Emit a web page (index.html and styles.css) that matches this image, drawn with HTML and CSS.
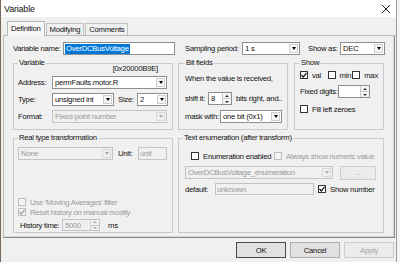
FILE: index.html
```html
<!DOCTYPE html>
<html lang="en">
<head>
    <meta charset="UTF-8">
    <title>Variable</title>
    <link rel="stylesheet" href="styles.css">
</head>
<body>
    <div class="window">
        <div class="titlebar">
            <span class="title">Variable</span>
            <svg class="close" width="10" height="10" viewBox="0 0 10 10"><path d="M1 1L9 9M9 1L1 9" stroke="#222" stroke-width="1"/></svg>
        </div>

        <!-- Tabs -->
        <div class="tabs">
            <div class="tab active">Definition</div>
            <div class="tab">Modifying</div>
            <div class="tab">Comments</div>
        </div>

        <div class="pane">
            <div class="row">
                <span class="lbl lbl-name">Variable name:</span>
                <div class="edit name-edit"><span class="selected">OverDCBusVoltage</span></div>
                <span class="lbl lbl-period">Sampling period:</span>
                <div class="combo period-combo"><span class="val">1 s</span><span class="drop"></span></div>
                <span class="lbl lbl-showas">Show as:</span>
                <div class="combo showas-combo"><span class="val">DEC</span><span class="drop"></span></div>
            </div>

            <div class="group-row top-groups">
                <fieldset class="group var-group">
                    <legend>Variable</legend>
                    <div class="addr-hex">[0x20000B9E]</div>
                    <div class="row first">
                        <span class="lbl lbl-var">Address:</span>
                        <div class="combo addr-combo"><span class="val">permFaults.motor.R</span><span class="drop"></span></div>
                    </div>
                    <div class="row">
                        <span class="lbl lbl-var">Type:</span>
                        <div class="combo type-combo"><span class="val">unsigned int</span><span class="drop"></span></div>
                        <span class="lbl lbl-size">Size:</span>
                        <div class="combo size-combo"><span class="val">2</span><span class="drop"></span></div>
                    </div>
                    <div class="row">
                        <span class="lbl lbl-var">Format:</span>
                        <div class="combo addr-combo disabled"><span class="val">Fixed point number</span><span class="drop"></span></div>
                    </div>
                </fieldset>

                <fieldset class="group bit-group">
                    <legend>Bit fields</legend>
                    <div class="bf-text">When the value is received,</div>
                    <div class="row shift-row">
                        <span class="lbl lbl-shift">shift it:</span>
                        <div class="spin shift-spin"><span class="val">8</span><span class="spin-btns"><i class="up"></i><i class="down"></i></span></div>
                        <span class="after">bits right, and..</span>
                    </div>
                    <div class="row mask-row">
                        <span class="lbl lbl-mask">mask with:</span>
                        <div class="combo mask-combo"><span class="val">one bit (0x1)</span><span class="drop"></span></div>
                    </div>
                </fieldset>

                <fieldset class="group show-group">
                    <legend>Show</legend>
                    <div class="cb-row show-checks">
                        <label class="cbitem item-val"><span class="cb checked"><svg width="6" height="6" viewBox="0 0 6 6"><path d="M0.5 3L2.3 5L5.5 0.8" fill="none" stroke="#111" stroke-width="1.2"/></svg></span>val</label>
                        <label class="cbitem item-min"><span class="cb"></span>min</label>
                        <label class="cbitem"><span class="cb"></span>max</label>
                    </div>
                    <div class="row digits-row">
                        <span class="lbl lbl-digits">Fixed digits:</span>
                        <div class="spin digits-spin"><span class="val"></span><span class="spin-btns"><i class="up"></i><i class="down"></i></span></div>
                    </div>
                    <div class="cb-row fill-row">
                        <label class="cbitem"><span class="cb"></span>Fill left zeroes</label>
                    </div>
                </fieldset>
            </div>

            <div class="group-row bottom-groups">
                <fieldset class="group real-group">
                    <legend>Real type transformation</legend>
                    <div class="gbody">
                        <div class="row none-row">
                            <div class="combo none-combo disabled"><span class="val">None</span><span class="drop"></span></div>
                            <span class="lbl lbl-unit">Unit:</span>
                            <div class="edit unit-edit disabled">unit</div>
                        </div>
                        <div class="history">
                            <div class="cb-row">
                                <label class="cbitem disabled"><span class="cb"></span>Use 'Moving Averages' filter</label>
                            </div>
                            <div class="cb-row">
                                <label class="cbitem disabled"><span class="cb checked"><svg width="6" height="6" viewBox="0 0 6 6"><path d="M0.5 3L2.3 5L5.5 0.8" fill="none" stroke="#9a9a9a" stroke-width="1.2"/></svg></span>Reset history on manual modify</label>
                            </div>
                            <div class="row history-row">
                                <span class="lbl lbl-history">History time:</span>
                                <div class="spin history-spin disabled"><span class="val">5000</span><span class="spin-btns"><i class="up"></i><i class="down"></i></span></div>
                                <span class="after ms">ms</span>
                            </div>
                        </div>
                    </div>
                </fieldset>

                <fieldset class="group enum-group">
                    <legend>Text enumeration (after transform)</legend>
                    <div class="cb-row enum-checks">
                        <label class="cbitem item-enum"><span class="cb"></span>Enumeration enabled</label>
                        <label class="cbitem disabled"><span class="cb"></span>Always show numeric value</label>
                    </div>
                    <div class="row enum-row">
                        <div class="combo enum-combo disabled"><span class="val">OverDCBusVoltage_enumeration</span><span class="drop"></span></div>
                        <div class="btn small-btn disabled">...</div>
                    </div>
                    <div class="row default-row">
                        <span class="lbl lbl-default">default:</span>
                        <div class="edit default-edit disabled">unknown</div>
                        <label class="cbitem item-shownum"><span class="cb checked"><svg width="6" height="6" viewBox="0 0 6 6"><path d="M0.5 3L2.3 5L5.5 0.8" fill="none" stroke="#111" stroke-width="1.2"/></svg></span>Show number</label>
                    </div>
                </fieldset>
            </div>
        </div>

        <!-- Dialog buttons -->
        <div class="buttons">
            <div class="btn dlg-btn default">OK</div>
            <div class="btn dlg-btn">Cancel</div>
            <div class="btn dlg-btn disabled">Apply</div>
        </div>
    </div>
</body>
</html>
```

FILE: styles.css
```css
/* General Styles */
* {
    box-sizing: border-box;
}

body {
    margin: 0;
    background-color: #f4f4f6;
    font-family: "Liberation Sans", Arial, sans-serif;
    font-size: 7.7px;
    letter-spacing: -0.25px;
    color: #111;
}

.window {
    width: 397px;
    height: 262px;
    overflow: hidden;
    background: #f0f0f0;
    border-left: 1px solid #7a6858;
    border-right: 1px solid #9a9a9a;
}

.titlebar {
    height: 17px;
    background: #fff;
    display: flex;
    align-items: center;
    justify-content: space-between;
    padding: 0 5px 0 3px;
}

.title {
    font-size: 9px;
    letter-spacing: -0.2px;
}

/* Tabs */
.tabs {
    display: flex;
    align-items: flex-end;
    height: 14px;
    margin-top: 4px;
    padding-left: 6px;
}

.tab {
    height: 12px;
    line-height: 11px;
    padding: 0 3px;
    margin-right: 1px;
    border: 1px solid #c2c2c2;
    border-bottom: none;
    background: #f0f0f0;
}

.tab.active {
    position: relative;
    z-index: 1;
    height: 15px;
    margin-bottom: -1px;
    line-height: 13px;
    background: #f7f7f7;
    border-color: #b8b8b8;
}

.pane {
    height: 203px;
    margin: 0 1px 0 2px;
    padding: 6px 0 0 9px;
    border: 1px solid #b8b8b8;
    border-right-color: #8a8a8a;
    border-bottom-color: #8a8a8a;
    box-shadow: inset -1px -1px 0 #d4d4d4;
}

/* Rows and labels */
.row {
    display: flex;
    align-items: center;
    height: 13px;
}

.lbl {
    flex: none;
    white-space: nowrap;
}

.lbl-name { width: 50px; }
.lbl-period { width: 57px; margin-left: 10px; }
.lbl-showas { width: 32px; margin-left: 8px; }
.lbl-var { width: 34px; }
.lbl-size { width: 19px; margin-left: 4px; }
.lbl-shift { width: 23px; }
.lbl-mask { width: 35px; }
.lbl-digits { width: 38px; }
.lbl-unit { width: 20px; margin-left: 5px; }
.lbl-history { width: 42px; margin-left: 2px; }
.lbl-default { width: 30px; margin-left: 2px; }

.after {
    margin-left: 4px;
    white-space: nowrap;
}

.ms {
    margin-left: 8px;
}

/* Controls */
.edit,
.combo,
.spin {
    display: flex;
    align-items: center;
    height: 13px;
    background: #fff;
    border: 1px solid #8e8e8e;
    white-space: nowrap;
    overflow: hidden;
}

.edit {
    padding-left: 1px;
}

.selected {
    background: #0078d7;
    color: #fff;
    line-height: 10px;
    padding: 0 1px;
}

.combo .val,
.spin .val {
    flex: 1;
    padding-left: 2px;
    overflow: hidden;
}

.drop {
    flex: none;
    width: 9px;
    height: 9px;
    margin-right: 1px;
    border: 1px solid #d0d0d0;
    background: #f6f6f6;
    display: flex;
    align-items: center;
    justify-content: center;
}

.drop::after {
    content: "";
    border-left: 2.5px solid transparent;
    border-right: 2.5px solid transparent;
    border-top: 3px solid #000;
}

.spin-btns {
    flex: none;
    width: 9px;
    height: 100%;
    display: flex;
    flex-direction: column;
    border-left: 1px solid #c8c8c8;
    background: #f4f4f4;
}

.spin-btns i {
    flex: 1;
    display: flex;
    align-items: center;
    justify-content: center;
}

.spin-btns i.up {
    border-bottom: 1px solid #c8c8c8;
}

.spin-btns i.up::after {
    content: "";
    border-left: 2px solid transparent;
    border-right: 2px solid transparent;
    border-bottom: 2px solid #333;
}

.spin-btns i.down::after {
    content: "";
    border-left: 2px solid transparent;
    border-right: 2px solid transparent;
    border-top: 2px solid #333;
}

.disabled {
    color: #9a9a9a;
}

.edit.disabled,
.combo.disabled,
.spin.disabled {
    background: #f0f0f0;
    border-color: #c4c4c4;
}

.combo.disabled .drop {
    background: #f0f0f0;
    border-color: #dadada;
}

.combo.disabled .drop::after {
    border-top-color: #ababab;
}

.spin.disabled .spin-btns {
    background: #f0f0f0;
    border-left-color: #d4d4d4;
}

.spin.disabled .spin-btns i.up::after { border-bottom-color: #aaa; }
.spin.disabled .spin-btns i.down::after { border-top-color: #aaa; }

.name-edit { width: 112px; }
.period-combo { width: 58px; }
.showas-combo { width: 45px; }
.addr-combo { width: 115px; }
.type-combo { width: 62px; }
.size-combo { flex: 1; }
.shift-spin { width: 24px; }
.mask-combo { width: 62px; }
.digits-spin { width: 32px; }
.none-combo { width: 95px; }
.unit-edit { width: 29px; }
.history-spin { width: 38px; height: 12px; }
.enum-combo { width: 148px; margin-left: 2px; }
.default-edit { width: 99px; height: 12px; }

/* Checkboxes */
.cb-row {
    display: flex;
    align-items: center;
    height: 10px;
}

.cbitem {
    display: flex;
    align-items: center;
    white-space: nowrap;
}

.cb {
    flex: none;
    width: 8px;
    height: 8px;
    margin-right: 4px;
    border: 1px solid #333;
    background: #fff;
    display: flex;
    align-items: center;
    justify-content: center;
}

.cbitem.disabled .cb {
    border-color: #bcbcbc;
    background: #f4f4f4;
}

/* Group boxes */
.group-row {
    display: flex;
    margin-top: 3px;
}

.group {
    margin: 0;
    padding: 0 4px;
    min-width: 0;
    border: 1px solid #cbcbcb;
}

.group legend {
    padding: 0 1px;
    line-height: 10px;
}

.top-groups .group {
    height: 72px;
}

.bottom-groups .group {
    height: 100px;
}

.var-group { width: 160px; }
.bit-group { width: 110px; margin-left: 5px; padding: 0 4px 0 6px; }
.show-group { width: 90px; margin-left: 6px; padding: 0 5px; }
.real-group { width: 160px; }
.enum-group { width: 206px; margin-left: 5px; }

.addr-hex {
    text-align: right;
    padding-right: 10px;
    line-height: 10px;
    margin-top: -4px;
}

.var-group .row {
    margin-top: 4px;
}

.var-group .row.first {
    margin-top: 2px;
}

.bf-text {
    line-height: 10px;
    margin-top: 6px;
    white-space: nowrap;
}

.shift-row { margin-top: 8px; }
.mask-row { margin-top: 5px; }

.show-checks { margin-top: 2px; }
.item-val { width: 29px; }
.item-min { width: 26px; }
.digits-row { margin-top: 5px; }
.fill-row { margin-top: 6px; }

.gbody {
    height: 89px;
    display: flex;
    flex-direction: column;
}

.none-row { margin-top: 4px; }

.history {
    margin-top: auto;
    padding-bottom: 1px;
}

.history-row {
    height: 12px;
    margin-top: 2px;
}

.enum-checks { margin-top: 8px; }
.item-enum { width: 83px; margin-left: 8px; }
.enum-row { margin-top: 5px; }
.default-row { margin-top: 4px; height: 12px; }
.item-shownum { margin-left: 4px; }

/* Buttons */
.btn {
    display: flex;
    align-items: center;
    justify-content: center;
    background: #e1e1e1;
    border: 1px solid #adadad;
}

.btn.disabled {
    background: #ececec;
    border-color: #cdcdcd;
    color: #a8a8a8;
}

.small-btn {
    width: 36px;
    height: 14px;
    margin-left: 7px;
}

.buttons {
    display: flex;
    justify-content: flex-end;
    gap: 4px;
    margin-top: 4px;
    padding-right: 2px;
}

.dlg-btn {
    width: 50px;
    height: 16px;
}

.dlg-btn.default {
    border-color: #4a4a4a;
}
```
